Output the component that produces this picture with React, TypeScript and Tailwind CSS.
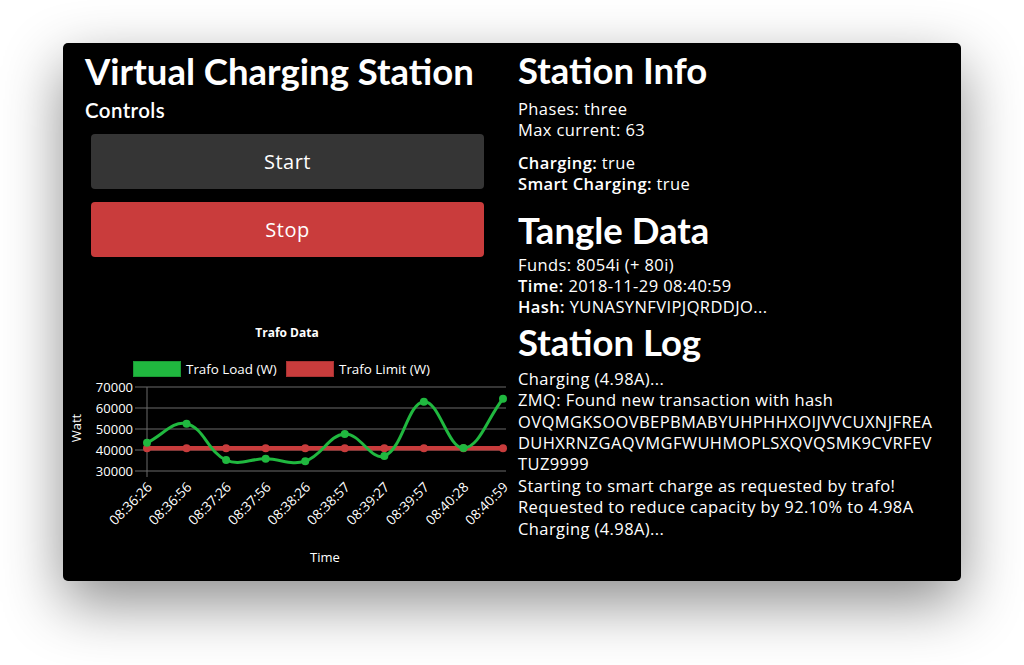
import React from 'react'

const times = ['08:36:26', '08:36:56', '08:37:26', '08:37:56', '08:38:26', '08:38:57', '08:39:27', '08:39:57', '08:40:28', '08:40:59']
const load = [43400, 52500, 35200, 35800, 34700, 47600, 37100, 63000, 40900, 64400]
const limit = times.map(() => 40800)

const X0 = 147
const X1 = 503
const Y_TOP = 387
const Y_BOT = 471

const xAt = (i: number) => X0 + (i * (X1 - X0)) / (times.length - 1)
const yAt = (v: number) => Y_BOT - ((v - 30000) / 40000) * (Y_BOT - Y_TOP)

type Pt = { x: number; y: number }

// same curve maths as chart.js (tension 0.4)
function splinePath(pts: Pt[]) {
  const t = 0.4
  const cps = pts.map((p, i) => {
    const prev = pts[i - 1] ?? p
    const next = pts[i + 1] ?? p
    const d01 = Math.hypot(p.x - prev.x, p.y - prev.y)
    const d12 = Math.hypot(next.x - p.x, next.y - p.y)
    const s01 = d01 + d12 ? d01 / (d01 + d12) : 0
    const s12 = d01 + d12 ? d12 / (d01 + d12) : 0
    return {
      px: p.x - t * s01 * (next.x - prev.x),
      py: p.y - t * s01 * (next.y - prev.y),
      nx: p.x + t * s12 * (next.x - prev.x),
      ny: p.y + t * s12 * (next.y - prev.y),
    }
  })
  let d = `M${pts[0].x},${pts[0].y}`
  for (let i = 1; i < pts.length; i++) {
    d += ` C${cps[i - 1].nx},${cps[i - 1].ny} ${cps[i].px},${cps[i].py} ${pts[i].x},${pts[i].y}`
  }
  return d
}

const TrafoChart = () => {
  const loadPts = load.map((v, i) => ({ x: xAt(i), y: yAt(v) }))
  const limitPts = limit.map((v, i) => ({ x: xAt(i), y: yAt(v) }))
  const ticks = [70000, 60000, 50000, 40000, 30000]
  const green = '#20b83f'
  const red = '#c83c3c'

  return (
    <svg
      width={445}
      height={260}
      viewBox="66 315 445 260"
      className="block -ml-[19px] overflow-visible"
      style={{ fontFamily: '"Open Sans", "Liberation Sans", sans-serif' }}
    >
      <text x={287} y={337} textAnchor="middle" fill="#fff" fontSize={12} fontWeight={700}>
        Trafo Data
      </text>

      {/* legend */}
      <rect x={133.5} y={361.5} width={47} height={15} fill={green} stroke="#1a9a34" />
      <text x={186} y={374} fill="#fff" fontSize={13.4}>Trafo Load (W)</text>
      <rect x={286.5} y={361.5} width={47} height={15} fill={red} stroke="#a83232" />
      <text x={339} y={374} fill="#fff" fontSize={13.4}>Trafo Limit (W)</text>

      {/* grid */}
      {ticks.map((v) => (
        <g key={v}>
          <line x1={135} x2={506} y1={yAt(v)} y2={yAt(v)} stroke="#6b6b6b" strokeWidth={1} />
          <text x={133} y={yAt(v) + 4.5} textAnchor="end" fill="#fff" fontSize={13}>
            {v}
          </text>
        </g>
      ))}
      <line x1={X0} x2={X0} y1={Y_TOP} y2={Y_BOT + 6} stroke="#6b6b6b" strokeWidth={1} />

      <text
        x={0}
        y={0}
        transform="translate(81 428) rotate(-90)"
        textAnchor="middle"
        fill="#fff"
        fontSize={13}
      >
        Watt
      </text>

      {/* x labels */}
      {times.map((tm, i) => (
        <text
          key={tm}
          x={0}
          y={0}
          transform={`translate(${xAt(i) + 6} 488) rotate(-45)`}
          textAnchor="end"
          fill="#fff"
          fontSize={13.6}
        >
          {tm}
        </text>
      ))}
      <text x={325} y={562} textAnchor="middle" fill="#fff" fontSize={13}>
        Time
      </text>

      {/* series */}
      <path d={splinePath(limitPts)} fill="none" stroke={red} strokeWidth={4.5} />
      {limitPts.map((p, i) => (
        <circle key={i} cx={p.x} cy={p.y} r={4} fill={red} />
      ))}
      <path d={splinePath(loadPts)} fill="none" stroke={green} strokeWidth={3} />
      {loadPts.map((p, i) => (
        <circle key={i} cx={p.x} cy={p.y} r={4} fill={green} />
      ))}
    </svg>
  )
}

const heading = "font-['Lato','Liberation_Sans',sans-serif] font-bold text-[36.5px] leading-[48px] text-white"

export default function App() {
  return (
    <div className="w-[1024px] h-[665px] bg-white pt-[43px] pl-[63px] font-['Open_Sans','Liberation_Sans',sans-serif]">
      <div className="w-[898px] h-[538px] bg-black rounded-[5px] shadow-[0_22px_60px_rgba(0,0,0,0.45)] grid grid-cols-[455px_1fr] overflow-hidden">
        {/* left column */}
        <div className="pl-[22px] pt-[4px]">
          <h1 className={heading}>Virtual Charging Station</h1>
          <h5 className="mt-[3px] text-[20.5px] leading-[24px] tracking-[0.4px] font-semibold text-white font-['Lato',sans-serif]">Controls</h5>

          <div className="ml-[6px] w-[393px] mt-[12px] flex flex-col gap-[13px]">
            <button className="h-[55px] rounded-[4px] bg-[#353535] text-white text-[20px] tracking-[0.5px]">Start</button>
            <button className="h-[55px] rounded-[4px] bg-[#c93c3c] text-white text-[20px] tracking-[0.5px]">Stop</button>
          </div>

          <div className="mt-[58px]">
            <TrafoChart />
          </div>
        </div>

        {/* right column */}
        <div className="pt-[3px] text-white text-[16.5px] leading-[21.4px] tracking-[0.4px]">
          <h1 className={`${heading} tracking-normal`}>Station Info</h1>
          <div className="mt-[4px]">
            <p>Phases: three</p>
            <p>Max current: 63</p>
          </div>
          <div className="mt-[11px]">
            <p><b className="font-semibold">Charging:</b> true</p>
            <p><b className="font-semibold">Smart Charging:</b> true</p>
          </div>

          <h1 className={`${heading} tracking-normal mt-[11px]`}>Tangle Data</h1>
          <div>
            <p>Funds: 8054i (+ 80i)</p>
            <p><b className="font-semibold">Time:</b> 2018-11-29 08:40:59</p>
            <p><b className="font-semibold">Hash:</b> YUNASYNFVIPJQRDDJO...</p>
          </div>

          <h1 className={`${heading} tracking-normal`}>Station Log</h1>
          <div className="mt-[2px]">
            <p>Charging (4.98A)...</p>
            <p>
              ZMQ: Found new transaction with hash
              <br />
              OVQMGKSOOVBEPBMABYUHPHHXOIJVVCUXNJFREA
              <br />
              DUHXRNZGAQVMGFWUHMOPLSXQVQSMK9CVRFEV
              <br />
              TUZ9999
            </p>
            <p>Starting to smart charge as requested by trafo!</p>
            <p>Requested to reduce capacity by 92.10% to 4.98A</p>
            <p>Charging (4.98A)...</p>
          </div>
        </div>
      </div>
    </div>
  )
}
